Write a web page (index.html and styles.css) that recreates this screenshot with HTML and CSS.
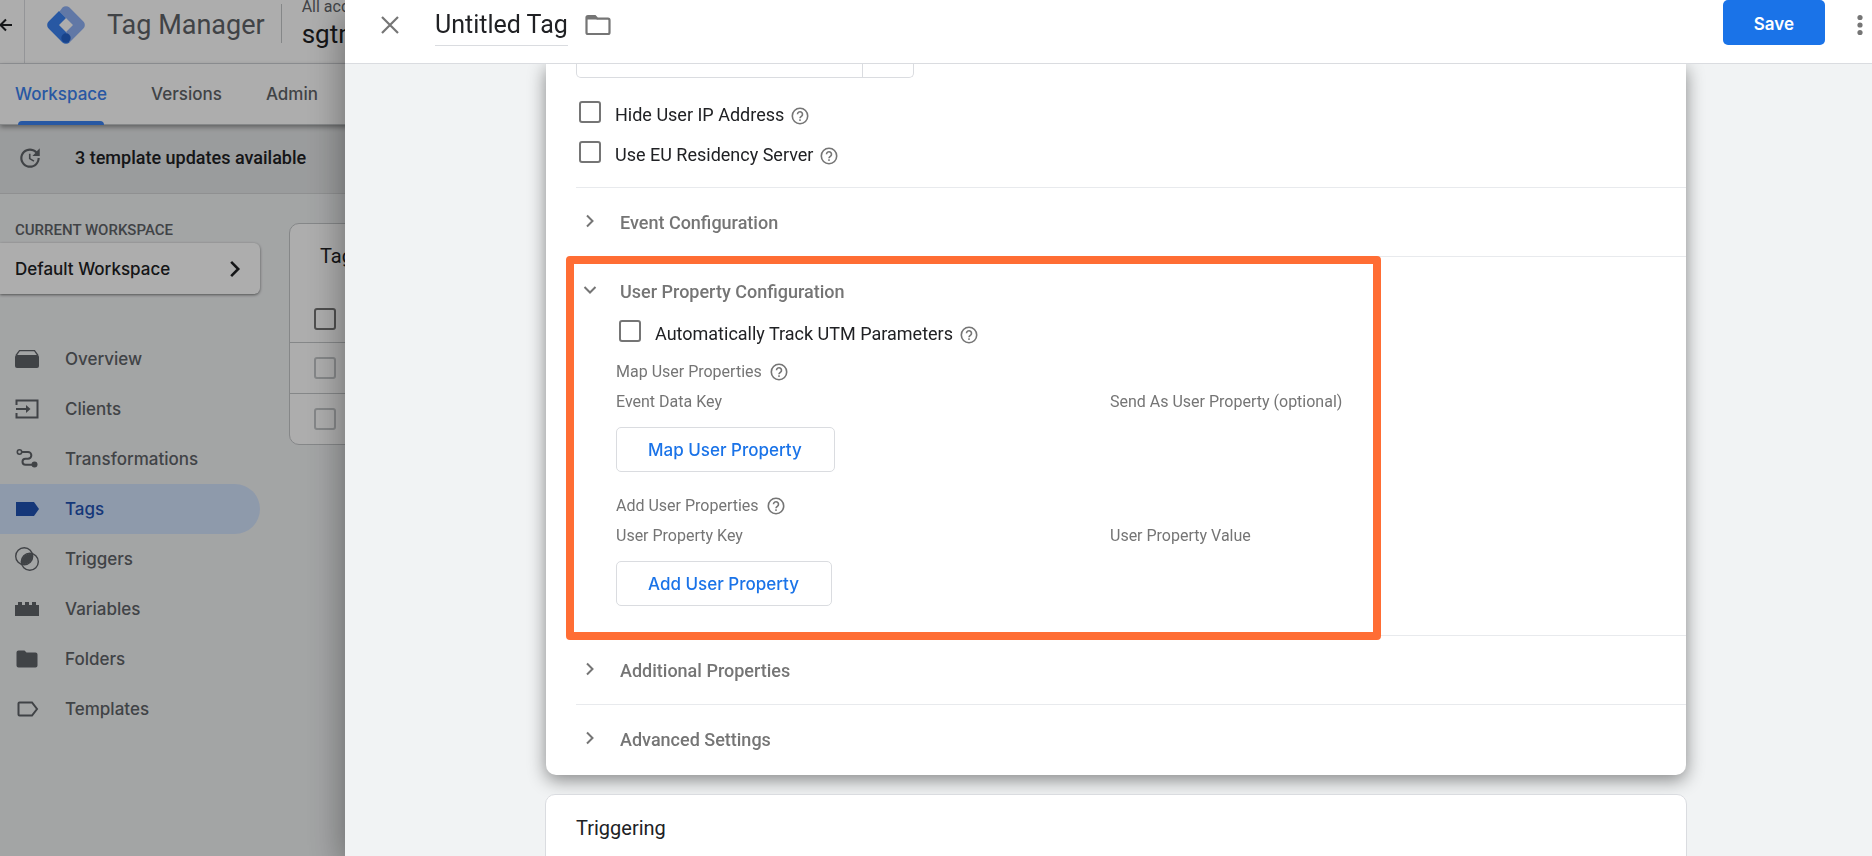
FILE: index.html
```html
<!DOCTYPE html>
<html lang="en">
<head>
<meta charset="utf-8">
<title>Tag Manager</title>
<link rel="stylesheet" href="styles.css">
</head>
<body>
<svg class="sprite" aria-hidden="true">
  <symbol id="help" viewBox="0 0 18 18">
    <circle cx="9" cy="9" r="7.7" fill="none" stroke="currentColor" stroke-width="1.6"/>
    <path d="M6.500 7.300a2.500 2.500 0 1 1 4.100 1.900C9.700 9.900 9 10.300 9 11.300" fill="none" stroke="currentColor" stroke-width="1.6"/>
    <rect x="8.200" y="12.300" width="1.600" height="1.600" fill="currentColor"/>
  </symbol>
  <symbol id="chevron" viewBox="0 0 14 14">
    <path d="M4 1.500 9.500 7 4 12.500" fill="none" stroke="currentColor" stroke-width="2"/>
  </symbol>
</svg>

<div class="app">
  <header class="app-header">
    <a class="back" href="#" aria-label="Back"><svg width="14" height="14" viewBox="0 0 14 14"><path d="M12 7H0M6 1.500 .500 7 6 12.500" fill="none" stroke="currentColor" stroke-width="2"/></svg></a>
    <div class="brand">
      <svg width="38" height="38" viewBox="0 0 38 38">
        <path d="M15.500 1.600a5 5 0 0 1 7 0L36.400 15.500a5 5 0 0 1 0 7L22.500 36.400 19 26l7-7-7-7-6.500-6.500z" fill="#8fb1f5"/>
        <path d="M12 5 19 12l-7 7 7 7 3.500 10.400a5 5 0 0 1-7 0L1.600 22.500a5 5 0 0 1 0-7z" fill="#3c82f0"/>
        <circle cx="19" cy="32" r="4.700" fill="#2463cc"/>
      </svg>
      <span class="brand-name">Tag Manager</span>
    </div>
    <div class="account">
      <span class="account-path">All accounts</span>
      <span class="account-name">sgtm</span>
    </div>
  </header>
  <nav class="tabs">
    <a class="tab active" href="#">Workspace</a>
    <a class="tab" href="#">Versions</a>
    <a class="tab" href="#">Admin</a>
  </nav>
  <div class="banner">
    <svg width="26" height="26" viewBox="0 0 24 24"><path fill="currentColor" d="M21 10.120h-6.780l2.740-2.820c-2.730-2.700-7.150-2.800-9.880-.100-2.730 2.710-2.730 7.080 0 9.790s7.150 2.710 9.880 0C18.320 15.650 19 14.080 19 12.100h2c0 1.980-.880 4.550-2.640 6.290-3.510 3.480-9.210 3.480-12.720 0-3.500-3.470-3.530-9.110-.020-12.580s9.140-3.470 12.650 0L21 3zM12.500 8v4.250l3.500 2.080-.720 1.210L11 13V8z"/></svg>
    <span>3 template updates available</span>
  </div>
  <div class="app-body">
    <aside class="sidebar">
      <h2 class="side-label">CURRENT WORKSPACE</h2>
      <button class="workspace">Default Workspace<svg width="18" height="18"><use href="#chevron"/></svg></button>
      <nav class="side-nav">
        <a class="side-item" href="#"><svg width="24" height="24" viewBox="0 0 24 24"><path d="M1 8.500 4.500 3.700h15L23 8.500" fill="none" stroke="currentColor" stroke-width="1.300"/><rect y="8" width="24" height="13" rx="2" fill="currentColor"/></svg>Overview</a>
        <a class="side-item" href="#"><svg width="24" height="24" viewBox="0 0 24 24"><path d="M1.500 8V3.500h21v17h-21V16M1 12h12" fill="none" stroke="currentColor" stroke-width="2"/><path d="M11 8l4.500 4-4.500 4z" fill="currentColor"/></svg>Clients</a>
        <a class="side-item" href="#"><svg width="24" height="24" viewBox="0 0 24 24"><circle cx="4.500" cy="5" r="2.200" fill="none" stroke="currentColor" stroke-width="1.600"/><path d="M7 5h6a3.200 3.200 0 0 1 0 6.700h-2.500a3 3 0 0 0 0 6H18" fill="none" stroke="currentColor" stroke-width="2"/><circle cx="19.500" cy="17.500" r="3" fill="currentColor"/></svg>Transformations</a>
        <a class="side-item active" href="#"><svg width="24" height="24" viewBox="0 0 24 24"><path d="M1 5h18l5 7-5 7H1z" fill="currentColor"/></svg>Tags</a>
        <a class="side-item" href="#"><svg width="24" height="24" viewBox="0 0 24 24"><g fill="none" stroke="currentColor" stroke-width="1.400"><circle cx="9.200" cy="9.200" r="8.500"/><circle cx="14.800" cy="14.800" r="8.500"/></g><path d="M17.500 7.500A8.500 8.500 0 0 1 6.500 16.500 8.500 8.500 0 0 1 17.500 7.500z" fill="currentColor" stroke="currentColor"/></svg>Triggers</a>
        <a class="side-item" href="#"><svg width="24" height="24" viewBox="0 0 24 24"><path d="M0 8h3V5h4v3h3V5h4v3h3V5h4v3h3v11H0z" fill="currentColor"/></svg>Variables</a>
        <a class="side-item" href="#"><svg width="24" height="24" viewBox="0 0 24 24"><path d="M3.500 3.500h6l2 2h9a2 2 0 0 1 2 2v11a2 2 0 0 1-2 2h-17a2 2 0 0 1-2-2v-13a2 2 0 0 1 2-2z" fill="currentColor"/></svg>Folders</a>
        <a class="side-item" href="#"><svg width="24" height="24" viewBox="0 0 24 24"><path d="M4.500 5.500H17l5 6.500-5 6.500H4.500a1 1 0 0 1-1-1v-11a1 1 0 0 1 1-1z" fill="none" stroke="currentColor" stroke-width="2"/></svg>Templates</a>
      </nav>
    </aside>
    <main class="tag-list">
      <h2 class="list-title">Tags</h2>
      <div class="list-row head"><input class="check" type="checkbox" aria-label="Select all tags"></div>
      <div class="list-row"><input class="check" type="checkbox" aria-label="Select tag 1"></div>
      <div class="list-row"><input class="check" type="checkbox" aria-label="Select tag 2"></div>
    </main>
  </div>
</div>
<div class="scrim"></div>

<section class="panel">
  <header class="panel-header">
    <button class="icon-button" aria-label="Close"><svg width="18" height="18" viewBox="0 0 18 18"><path d="M1 1l16 16M17 1 1 17" stroke="currentColor" stroke-width="2.200"/></svg></button>
    <h1 class="panel-title">Untitled Tag</h1>
    <button class="icon-button" aria-label="Choose folder"><svg width="26" height="22" viewBox="0 0 26 22"><path d="M3 2h7l2.500 2.700H23a1.500 1.500 0 0 1 1.500 1.500V18.500A1.500 1.500 0 0 1 23 20H3a1.500 1.500 0 0 1-1.500-1.500v-15A1.500 1.500 0 0 1 3 2z" fill="none" stroke="currentColor" stroke-width="2.200"/><path d="M2 2h8l2.500 3.500H2z" fill="currentColor"/></svg></button>
    <button class="save">Save</button>
    <button class="icon-button" aria-label="More actions"><svg width="6" height="22" viewBox="0 0 6 22" fill="currentColor"><circle cx="3" cy="3.500" r="2.600"/><circle cx="3" cy="11" r="2.600"/><circle cx="3" cy="18.500" r="2.600"/></svg></button>
  </header>
  <div class="panel-body">
    <div class="card config">
      <div class="field"><input class="field-input" type="text" aria-label="Field value"><button class="field-button" aria-label="Choose variable"></button></div>
      <div class="options">
        <div class="option"><input class="check" type="checkbox" id="hide-ip"><label for="hide-ip">Hide User IP Address</label><svg class="help"><use href="#help"/></svg></div>
        <div class="option"><input class="check" type="checkbox" id="eu"><label for="eu">Use EU Residency Server</label><svg class="help"><use href="#help"/></svg></div>
      </div>
      <section class="group"><button class="group-head"><svg class="chevron"><use href="#chevron"/></svg>Event Configuration</button></section>
      <section class="group open">
        <button class="group-head"><svg class="chevron"><use href="#chevron"/></svg>User Property Configuration</button>
        <div class="group-body">
          <div class="option nested"><input class="check" type="checkbox" id="utm"><label for="utm">Automatically Track UTM Parameters</label><svg class="help"><use href="#help"/></svg></div>
          <div class="mapping">
            <div class="mapping-title">Map User Properties<svg class="help"><use href="#help"/></svg></div>
            <div class="mapping-columns"><span>Event Data Key</span><span>Send As User Property (optional)</span></div>
            <button class="outlined">Map User Property</button>
          </div>
          <div class="mapping">
            <div class="mapping-title">Add User Properties<svg class="help"><use href="#help"/></svg></div>
            <div class="mapping-columns"><span>User Property Key</span><span>User Property Value</span></div>
            <button class="outlined">Add User Property</button>
          </div>
        </div>
      </section>
      <section class="group"><button class="group-head"><svg class="chevron"><use href="#chevron"/></svg>Additional Properties</button></section>
      <section class="group"><button class="group-head"><svg class="chevron"><use href="#chevron"/></svg>Advanced Settings</button></section>
    </div>
    <div class="card triggering"><h2 class="card-title">Triggering</h2></div>
  </div>
</section>
</body>
</html>
```
FILE: styles.css
```css
* { box-sizing: border-box; }
body {
  margin: 0;
  height: 100vh;
  overflow: hidden;
  font-family: Roboto, "Liberation Sans", sans-serif;
  font-size: 18px;
  line-height: 24px;
  color: #202124;
  background: #f1f3f4;
}
button, input { font: inherit; color: inherit; margin: 0; }
button { padding: 0; border: 0; background: none; text-align: left; cursor: pointer; }
a { color: inherit; text-decoration: none; }
h1, h2 { margin: 0; font-weight: 400; }
svg { flex: none; display: block; }
.sprite { position: absolute; width: 0; height: 0; }

/* Workspace behind the panel */
.app { height: 100%; display: flex; flex-direction: column; }
.app-header { display: flex; height: 64px; background: #fff; border-bottom: 1px solid #dadce0; }
.back { display: flex; align-items: center; width: 25px; padding-bottom: 13px; border-right: 1px solid #dadce0; }
.brand { display: flex; align-items: center; gap: 22px; padding: 0 16px 14px 22px; color: #5f6368; }
.brand-name { font-size: 27px; line-height: 32px; }
.account { display: flex; flex-direction: column; margin: 4px 0 20px; padding-left: 20px; border-left: 1px solid #c4c7c9; white-space: nowrap; }
.account-path { font-size: 16px; line-height: 20px; margin-top: -7px; color: #5f6368; }
.account-name { font-size: 26px; line-height: 32px; margin-top: 1px; }
.tabs {
  display: flex; gap: 44px; height: 61px; padding: 0 15px; background: #fff;
  border-bottom: 1px solid #c4c7c9; box-shadow: 0 2px 5px rgba(0, 0, 0, .4);
  z-index: 1; font-family: Inter, sans-serif; font-size: 17px; font-weight: 500; color: #5f6368;
}
.tab { display: flex; align-items: center; position: relative; }
.tab.active { color: #3c82f0; }
.tab.active::after {
  content: ""; position: absolute; left: 3px; right: 3px; bottom: -1px; height: 4px;
  border-radius: 4px 4px 0 0; background: #3c82f0;
}
.banner {
  display: flex; align-items: center; gap: 32px; height: 69px; padding: 0 17px 2px;
  background: #e4e6e7; border-bottom: 1px solid #d3d5d6; font-weight: 500; color: #5f6368;
}
.banner span { color: #202124; }
.app-body { display: flex; flex: 1; gap: 29px; }
.sidebar { width: 260px; padding-top: 24px; }
.side-label { padding-left: 15px; margin-bottom: 1px; font-size: 15px; font-weight: 500; color: #5f6368; }
.workspace {
  display: flex; align-items: center; justify-content: space-between; width: 100%; height: 51px;
  padding: 0 16px 0 15px; border-radius: 0 6px 6px 0; background: #fff; font-family: Inter, sans-serif; font-size: 17px; font-weight: 500;
  box-shadow: 0 1px 3px rgba(0, 0, 0, .5);
}
.side-nav { margin-top: 40px; font-family: Inter, sans-serif; font-size: 17px; font-weight: 500; color: #5f6368; }
.side-item { display: flex; align-items: center; gap: 26px; height: 50px; padding-left: 15px; border-radius: 0 25px 25px 0; }
.side-item.active { background: #d2e3fc; color: #1f52b3; }
.tag-list { flex: 1; align-self: flex-start; margin-top: 29px; border: 1px solid #c4c7c9; border-radius: 10px; background: #fff; }
.list-title { padding: 20px 30px 0; font-size: 20px; }
.list-row { display: flex; align-items: center; height: 51px; padding-left: 24px; border-top: 1px solid #c4c7c9; }
.list-row .check { border-color: #c4c7c9; }
.list-row.head { height: 74px; padding-top: 28px; border-top: 0; }
.list-row.head .check { border-color: #757575; }
.scrim { position: fixed; inset: 0; z-index: 2; background: rgba(0, 0, 0, .32); }

/* Tag editor */
.panel {
  position: fixed; inset: 0 0 0 345px; z-index: 3; display: flex; flex-direction: column;
  background: #f1f3f4; box-shadow: 0 12px 36px rgba(0, 0, 0, .4);
}
.panel-header { display: flex; align-items: flex-start; height: 64px; padding: 0 9px 0 36px; flex: none; background: #fff; border-bottom: 1px solid #dadce0; color: #757575; z-index: 1; }
.icon-button { display: flex; align-items: center; height: 49px; }
.panel-title { margin: 9px 17px 0 36px; padding-bottom: 4px; font-size: 25px; line-height: 32px; color: #202124; border-bottom: 1px solid #dadce0; }
.save { height: 45px; margin: 0 32px 0 auto; padding: 2px 31px 0; border-radius: 5px; background: #1a73e8; color: #fff; font-family: Inter, sans-serif; font-size: 17px; font-weight: 600; }
.panel-body { flex: 1; padding: 0 186px 0 201px; overflow: hidden; }
.card { background: #fff; padding-left: 30px; border-radius: 10px; }
.config { border-radius: 0 0 10px 10px; padding-bottom: 2px; box-shadow: 0 5px 18px rgba(0, 0, 0, .45); }
.field { display: flex; width: 338px; height: 14px; border: 1px solid #dadce0; border-top: 0; border-radius: 0 0 5px 5px; }
.field-input { flex: 1; min-width: 0; border: 0; background: none; outline: 0; padding: 0 12px; }
.field-button { width: 51px; border-left: 1px solid #dadce0; }
.options { display: flex; flex-direction: column; gap: 12px; padding: 23px 0 18px 3px; }
.option { display: flex; gap: 14px; line-height: 28px; }
.option .help { margin-top: 6px; }
.check { appearance: none; flex: none; width: 22px; height: 22px; border: 2px solid #757575; border-radius: 3px; background: transparent; }
.help { width: 18px; height: 18px; color: #757575; }
.option label { margin-right: -7px; }
.group { position: relative; border-top: 1px solid #e8eaed; }
.group-head { display: flex; align-items: center; width: 100%; gap: 23px; padding: 23px 0 21px 7px; font-weight: 500; color: #757575; }
.chevron { width: 14px; height: 14px; margin-bottom: 5px; }
.open .chevron { transform: rotate(90deg); }
.open .group-head { padding-bottom: 16px; }
.open::after {
  content: ""; position: absolute; inset: -1px 305px -5px -10px; z-index: 1; pointer-events: none;
  border: 8px solid #ff6d34; border-radius: 4px;
}
.group-body { padding: 0 0 29px 40px; }
.option.nested { padding-left: 3px; margin-bottom: 12px; }
.mapping + .mapping { margin-top: 22px; }
.mapping { font-size: 16px; color: #757575; }
.mapping-title { display: flex; align-items: center; gap: 8px; }
.mapping-columns { display: grid; grid-template-columns: 494px 1fr; margin: 6px 0 13px; }
.outlined { display: block; height: 45px; padding: 0 32px 0 31px; border: 1px solid #dadce0; border-radius: 5px; font-family: Inter, sans-serif; font-size: 17px; font-weight: 500; color: #1a73e8; }
.triggering { height: 100px; margin: 19px -1px 0; padding-top: 21px; border: 1px solid #dadce0; position: relative; }
.card-title { font-size: 20px; }
```
